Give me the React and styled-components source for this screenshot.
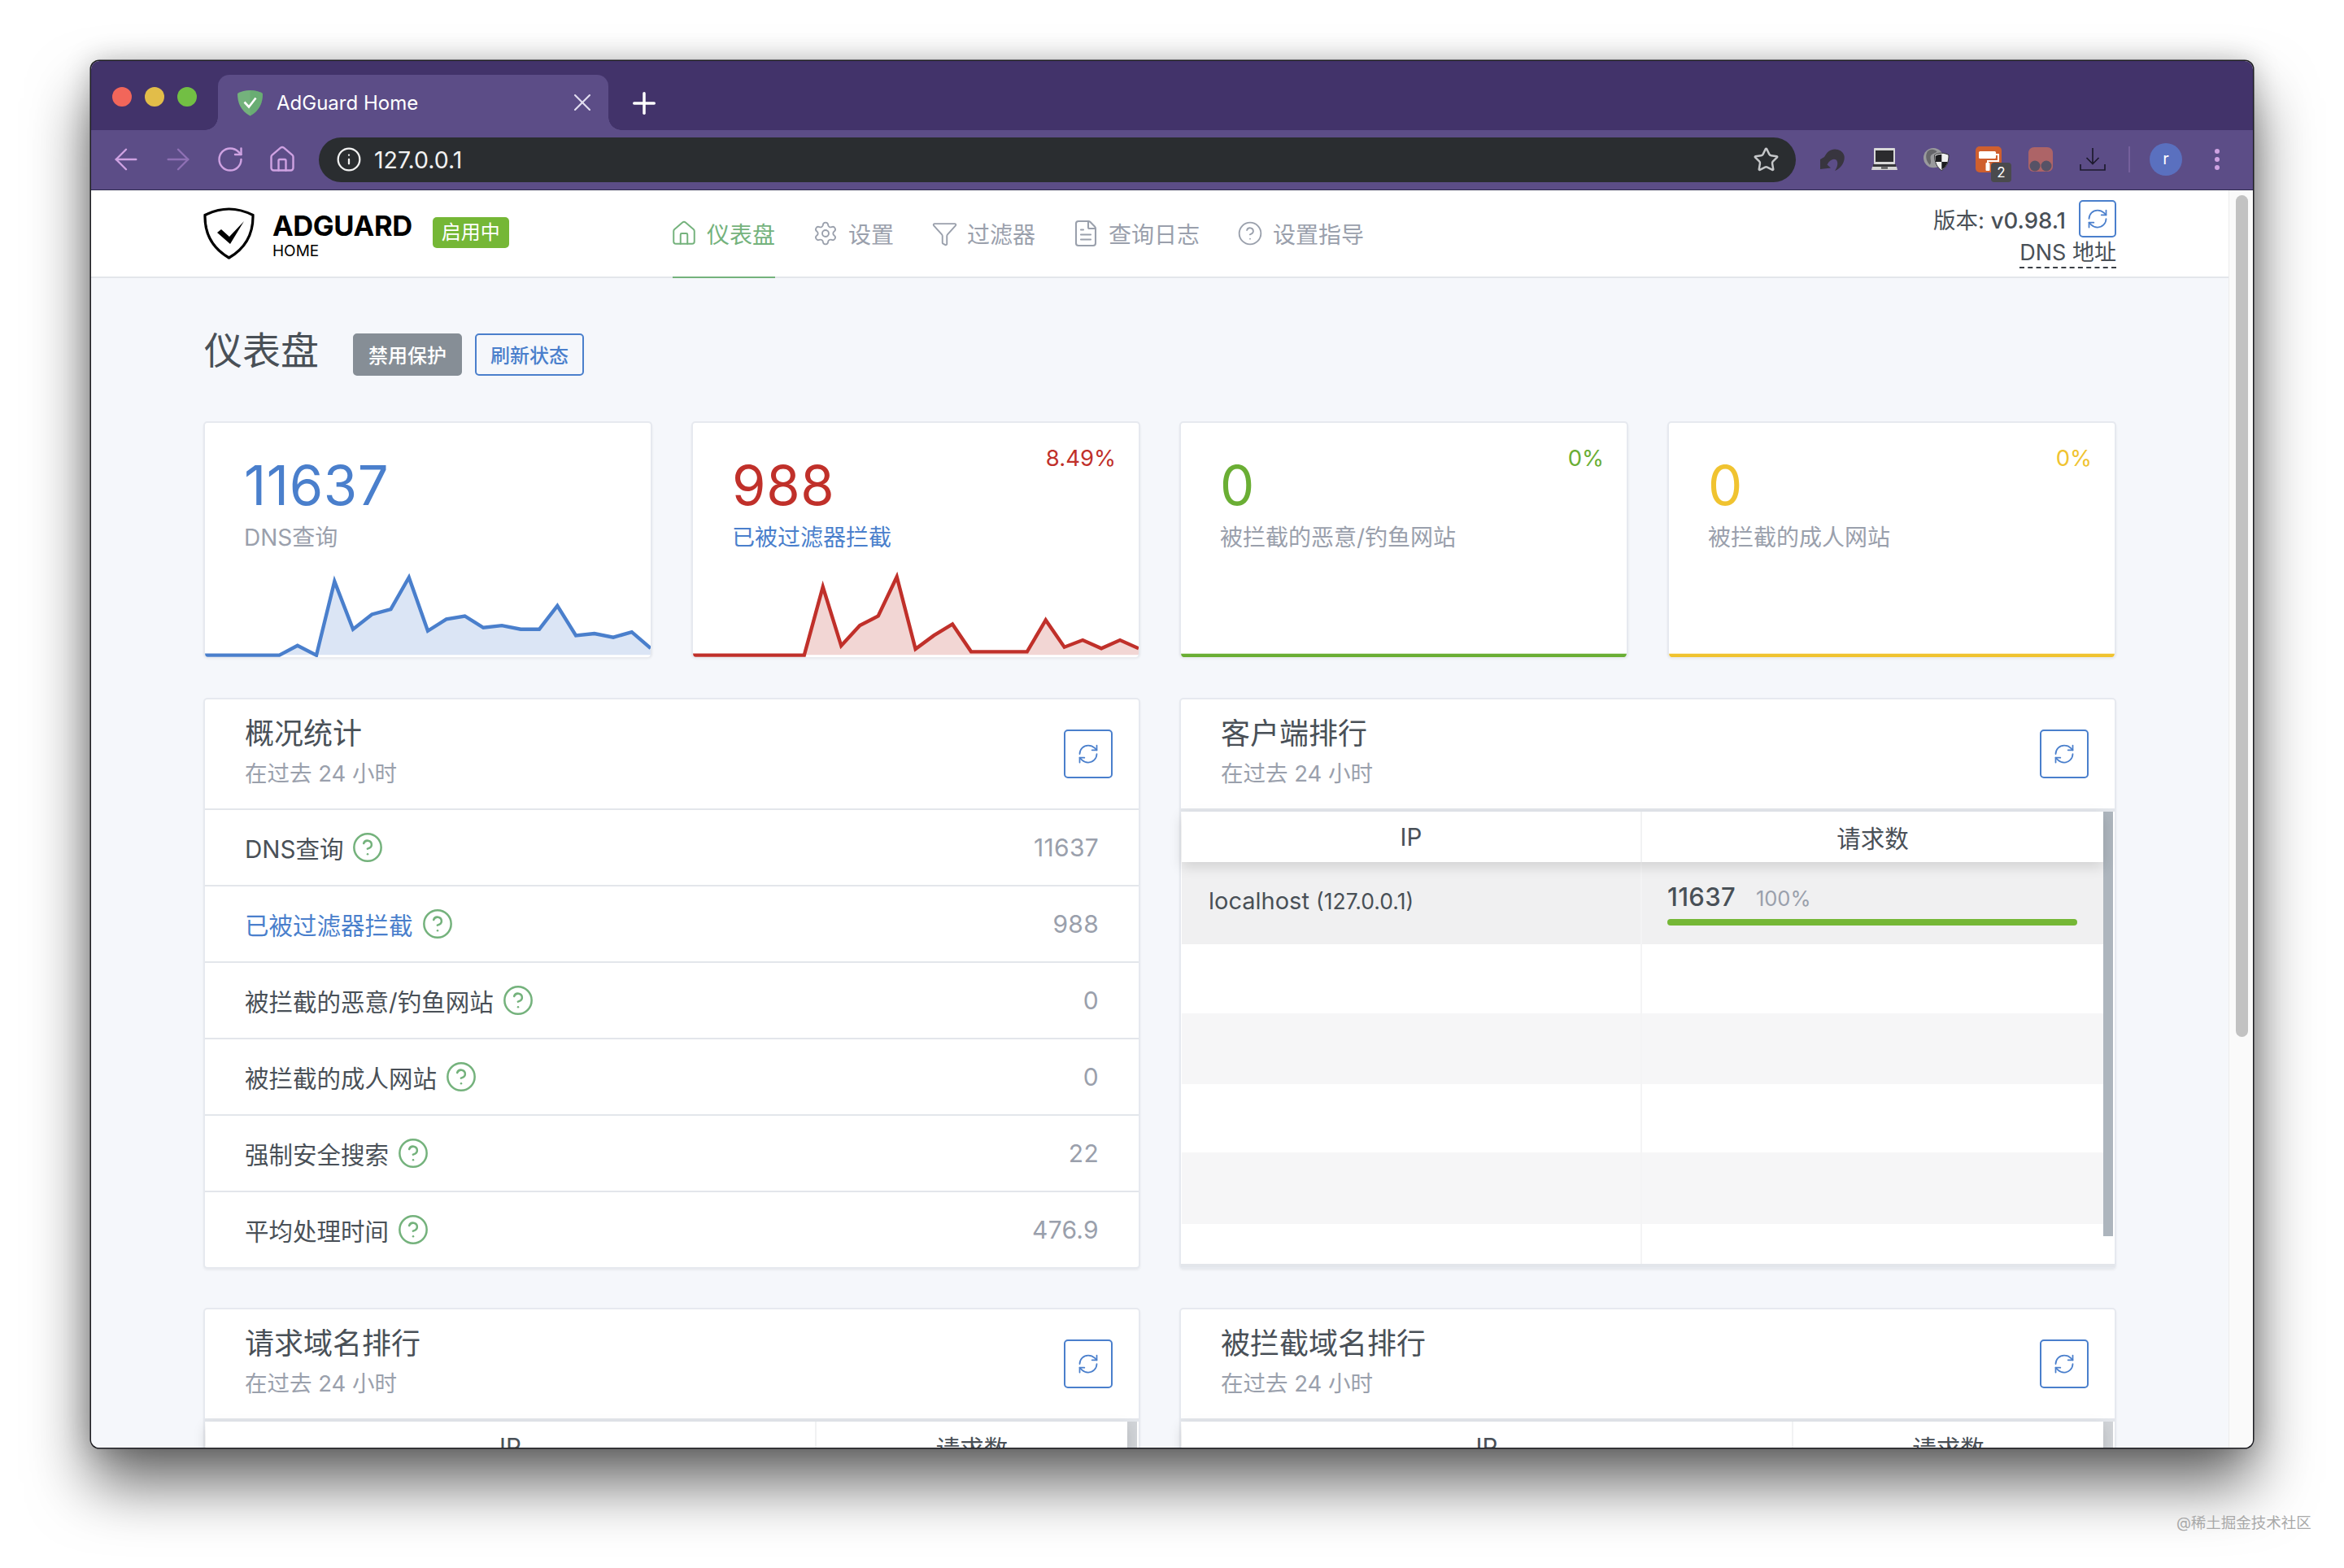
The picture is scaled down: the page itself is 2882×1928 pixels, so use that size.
import React from "react";
import styled, { createGlobalStyle } from "styled-components";
import {
  ArrowLeft,
  ArrowRight,
  RotateCw,
  House,
  Info,
  Star,
  Settings,
  Funnel,
  FileText,
  CircleHelp,
  RefreshCw,
  X,
  Plus,
} from "lucide-react";

const SANS = `Inter, "Noto Sans CJK SC", sans-serif`;
const BLUE = "#4a7fcc";
const GREEN = "#74b27c";
const LINE = "#e3e6eb";
const MUTED = "#9aa0ac";
const TEXT = "#495057";

const GlobalStyle = createGlobalStyle`
  html, body {
    margin: 0;
    background: #fff;
    font-family: ${SANS};
  }
  * { box-sizing: border-box; }
`;

// Screenshot backdrop, the browser window floats on it
const Backdrop = styled.div`
  position: relative;
  width: 2882px;
  height: 1928px;
  padding: 75px 0 0 112px;
  overflow: hidden;
  background: #fff;
`;

const Watermark = styled.div`
  position: absolute;
  left: 2676px;
  top: 1860px;
  font-size: 18.5px;
  line-height: 24px;
  color: #a9a9a9;
`;

const BrowserWindow = styled.div`
  width: 2658px;
  height: 1705px;
  display: flex;
  flex-direction: column;
  overflow: hidden;
  border-radius: 10px;
  box-shadow: 0 0 0 1.5px #1d1d22, 0 44px 76px rgba(0, 0, 0, 0.6), 0 0 34px rgba(0, 0, 0, 0.22);
`;

const TabStrip = styled.div`
  height: 85px;
  flex: none;
  display: flex;
  align-items: flex-end;
  padding-left: 26px;
  background: #42336a;
`;

const Lights = styled.div`
  display: flex;
  gap: 16px;
  margin: 0 26px 29px 0;
`;

const Light = styled.span`
  width: 24px;
  height: 24px;
  border-radius: 50%;
  background: ${(p) => p.$color};
`;

const Tab = styled.div`
  position: relative;
  width: 480px;
  height: 68px;
  display: flex;
  align-items: center;
  padding: 0 14px 0 23px;
  border-radius: 14px 14px 0 0;
  background: #5c4d87;
  color: #fff;
  font-size: 24px;

  &::before,
  &::after {
    content: "";
    position: absolute;
    bottom: 0;
    width: 16px;
    height: 16px;
  }
  &::before {
    left: -16px;
    background: radial-gradient(circle at 0 0, transparent 15.5px, #5c4d87 16px);
  }
  &::after {
    right: -16px;
    background: radial-gradient(circle at 100% 0, transparent 15.5px, #5c4d87 16px);
  }
`;

const TabTitle = styled.span`
  flex: 1;
  margin-left: 16px;
`;

const NewTab = styled.div`
  display: flex;
  align-self: center;
  margin: 18px 0 0 23px;
  color: #fff;
`;

const Toolbar = styled.div`
  height: 74px;
  flex: none;
  display: flex;
  align-items: center;
  padding: 0 0 1px 22px;
  border-bottom: 1.5px solid #2e2a4e;
  background: #5c4d87;
`;

const NavIcons = styled.div`
  display: flex;
  gap: 22px;
  margin-right: 24px;
  color: #cfa2e2;
`;

const NavIconSlot = styled.span`
  width: 42px;
  height: 42px;
  display: flex;
  align-items: center;
  justify-content: center;
  color: ${(p) => p.$color || "inherit"};
`;

const AddressBar = styled.div`
  width: 1816px;
  height: 55px;
  display: flex;
  align-items: center;
  padding: 0 20px 0 21px;
  border-radius: 28px;
  background: #2a2d30;
  color: #f1f1f1;
`;

const AddressText = styled.span`
  flex: 1;
  margin-left: 15px;
  font-size: 28.5px;
`;

const Extensions = styled.div`
  display: flex;
  align-items: center;
  gap: 32px;
  margin-left: 29px;
`;

const ExtSlot = styled.div`
  position: relative;
  width: 32px;
  height: 32px;
  display: flex;
  align-items: center;
  justify-content: center;
`;

const ExtBadge = styled.span`
  position: absolute;
  left: 19px;
  top: 20px;
  width: 25px;
  height: 24px;
  border-radius: 4px;
  background: #4a4a4d;
  color: #fff;
  font-size: 17px;
  line-height: 24px;
  text-align: center;
`;

const Divider = styled.span`
  width: 2px;
  height: 32px;
  margin-left: -4px;
  background: #75609c;
`;

const Avatar = styled.span`
  width: 40px;
  height: 40px;
  margin-left: -8px;
  border-radius: 50%;
  background: #5a70bf;
  color: #fff;
  font-size: 20px;
  line-height: 38px;
  text-align: center;
`;

const Kebab = styled.div`
  display: flex;
  flex-direction: column;
  gap: 4px;
  margin-left: 8px;

  span {
    width: 6px;
    height: 6px;
    border-radius: 50%;
    background: #cfa2e2;
  }
`;

const Viewport = styled.div`
  flex: 1;
  min-height: 0;
  display: flex;
`;

const Page = styled.div`
  flex: 1;
  min-width: 0;
  overflow: hidden;
  background: #f5f7fb;
`;

const WindowScroll = styled.div`
  width: 30px;
  flex: none;
  padding: 6px 6px 0 8px;
  border-left: 1px solid #ececec;
  background: #fafafa;

  &::before {
    content: "";
    display: block;
    height: 1035px;
    border-radius: 8px;
    background: #c2c2c2;
  }
`;

const Header = styled.header`
  height: 108px;
  display: flex;
  align-items: center;
  padding: 0 138px;
  border-bottom: 2px solid ${LINE};
  background: #fff;
`;

const Brand = styled.div`
  display: flex;
  align-items: center;
  width: 577px;
  flex: none;
`;

const BrandText = styled.div`
  margin: 6px 0 0 22px;
  color: #000;
`;

const BrandName = styled.div`
  font-size: 34.5px;
  font-weight: 700;
  line-height: 34px;
  letter-spacing: -0.4px;
`;

const BrandSub = styled.div`
  margin-top: 3px;
  font-size: 19px;
  line-height: 22px;
`;

const StatusBadge = styled.span`
  margin: -2px 0 0 25px;
  padding: 0 11px;
  height: 38px;
  border-radius: 5px;
  background: #75b736;
  color: #fff;
  font-size: 24px;
  line-height: 38px;
`;

const Nav = styled.nav`
  align-self: stretch;
  display: flex;
  gap: 48px;
`;

const NavItem = styled.a`
  display: flex;
  align-items: center;
  gap: 14px;
  height: 108px;
  border-bottom: 2px solid ${(p) => (p.$active ? GREEN : "transparent")};
  color: ${(p) => (p.$active ? GREEN : MUTED)};
  font-size: 28px;
`;

const NavGlyph = styled.span`
  width: 28px;
  display: flex;
  justify-content: center;

  svg {
    flex: none;
  }
`;

const HeaderMeta = styled.div`
  margin-left: auto;
  display: flex;
  flex-direction: column;
  align-items: flex-end;
  padding-top: 1px;
  color: ${TEXT};
  font-size: 27.5px;
`;

const VersionRow = styled.div`
  display: flex;
  align-items: center;
  gap: 16px;

  b {
    font-weight: 500;
  }
`;

const DnsLink = styled.span`
  margin-top: 2px;
  font-size: 27px;
  line-height: 34px;
  border-bottom: 2px dashed #3a3f45;
`;

const Content = styled.main`
  padding: 68px 138px 0;
`;

const PageHead = styled.div`
  height: 52px;
  display: flex;
  align-items: center;
  margin-bottom: 56px;
`;

const PageTitle = styled.h1`
  margin: -10px 42px 0 1px;
  color: ${TEXT};
  font-size: 47px;
  font-weight: 400;
  line-height: 52px;
`;

const Button = styled.button`
  height: 52px;
  margin-right: 16px;
  padding: 0 17px 2px;
  border: 2px solid ${(p) => (p.$solid ? "#868e96" : BLUE)};
  border-radius: 5px;
  background: ${(p) => (p.$solid ? "#868e96" : "transparent")};
  color: ${(p) => (p.$solid ? "#fff" : BLUE)};
  font-family: ${SANS};
  font-size: 24px;
  font-weight: 500;
`;

const IconButton = styled.button`
  width: ${(p) => p.$size}px;
  height: ${(p) => p.$size}px;
  display: flex;
  align-items: center;
  justify-content: center;
  padding: 0;
  border: 2px solid ${BLUE};
  border-radius: 5px;
  background: #fff;
  color: ${BLUE};
`;

const StatGrid = styled.section`
  display: grid;
  grid-template-columns: repeat(4, 1fr);
  gap: 48px;
  margin-bottom: 50px;
`;

const StatCard = styled.article`
  height: 290px;
  display: flex;
  flex-direction: column;
  overflow: hidden;
  border: 2px solid #e6e9ef;
  border-bottom: 0;
  border-radius: 5px;
  background: #fff;
  box-shadow: 0 2px 3px rgba(0, 0, 0, 0.06);
`;

const StatTop = styled.div`
  display: flex;
  justify-content: space-between;
  padding: 41px 28px 0 48px;
`;

const StatValue = styled.div`
  color: ${(p) => p.$color};
  font-size: 67px;
  line-height: 72px;
  letter-spacing: 0.6px;
`;

const StatPercent = styled.div`
  margin-top: -16px;
  color: ${(p) => p.$color};
  font-size: 27.5px;
  line-height: 36px;
`;

const StatLabel = styled.div`
  padding: 10px 0 0 48px;
  color: ${(p) => p.$color || MUTED};
  font-size: 28px;
  line-height: 36px;
`;

const Spark = styled.svg`
  display: block;
  width: 100%;
  height: 128px;
  margin-top: auto;
  flex: none;
`;

const PanelGrid = styled.section`
  display: grid;
  grid-template-columns: 1fr 1fr;
  gap: 48px;
`;

const Panel = styled.article`
  height: 702px;
  display: flex;
  flex-direction: column;
  border: 2px solid #e6e9ef;
  border-radius: 5px;
  background: #fff;
  box-shadow: 0 2px 3px rgba(0, 0, 0, 0.05);
`;

const PanelHead = styled.div`
  height: 136px;
  flex: none;
  display: flex;
  align-items: center;
  justify-content: space-between;
  padding: 0 32px 0 49px;
  border-bottom: 2px solid ${LINE};
`;

const PanelHeadText = styled.div`
  padding-bottom: 8px;
`;

const PanelTitle = styled.h2`
  margin: 0;
  color: ${TEXT};
  font-size: 36px;
  font-weight: 400;
  line-height: 48px;
`;

const PanelSub = styled.div`
  margin-top: 7px;
  color: ${MUTED};
  font-size: 27.5px;
  line-height: 36px;
`;

const StatRow = styled.div`
  flex: 1;
  display: flex;
  align-items: center;
  padding: 0 49px;
  border-bottom: 2px solid ${LINE};
  color: ${(p) => (p.$link ? BLUE : TEXT)};
  font-size: 29.5px;

  &:last-child {
    border-bottom: 0;
  }
`;

const RowHelp = styled.span`
  display: flex;
  margin-left: 10px;
  color: ${GREEN};
`;

const RowValue = styled.span`
  margin-left: auto;
  color: ${MUTED};
  font-size: 30px;
  letter-spacing: 0.3px;
`;

const TableWrap = styled.div`
  flex: 1;
  min-height: 0;
  display: flex;
  padding: 0 2px 0 1px;
  border-top: 2px solid ${LINE};
  border-bottom: 4px solid ${LINE};
`;

const Table = styled.div`
  flex: 1;
  min-width: 0;
  display: flex;
  flex-direction: column;
`;

const TableHead = styled.div`
  position: relative;
  z-index: 1;
  height: 62px;
  flex: none;
  display: grid;
  grid-template-columns: ${(p) => p.$first}px 1fr;
  background: #fff;
  box-shadow: 0 6px 15px rgba(0, 0, 0, 0.13);
  color: ${TEXT};
  font-size: 29.5px;
`;

const HeadCell = styled.div`
  display: flex;
  align-items: center;
  justify-content: center;
  border-right: 2px solid #f1f2f3;

  &:last-child {
    border-right: 0;
  }
`;

const TableRow = styled.div`
  flex: ${(p) => (p.$height ? `0 0 ${p.$height}px` : "1")};
  display: grid;
  grid-template-columns: ${(p) => p.$first}px 1fr;
  background: ${(p) => p.$bg};
`;

const Cell = styled.div`
  display: flex;
  flex-direction: column;
  justify-content: center;
  padding: 0 32px 0 ${(p) => p.$pad || 33}px;
  border-right: 2px solid #f4f4f5;
  color: ${TEXT};

  &:last-child {
    border-right: 0;
  }
`;

const ClientName = styled.div`
  margin-top: -6px;
  font-size: 29px;

  small {
    font-size: 26.5px;
  }
`;

const CountLine = styled.div`
  display: flex;
  align-items: baseline;
  gap: 25px;
  font-size: 31px;
  font-weight: 500;
  letter-spacing: 0.3px;

  span {
    color: ${MUTED};
    font-size: 25.5px;
    font-weight: 400;
    letter-spacing: 0;
  }
`;

const Bar = styled.div`
  height: 8px;
  margin-top: 9px;
  border-radius: 4px;
  background: #75b736;
`;

const TableScroll = styled.div`
  width: 12px;
  flex: none;

  &::before {
    content: "";
    display: block;
    height: 522px;
    background: ${(p) => p.$color};
  }
`;

// Points read off the reference, in the viewBox units of each chart
const QUERY_POINTS = [
  [50, 1278], [255, 1278], [305, 1242], [357, 1278], [407, 1005], [458, 1182], [510, 1127], [562, 1108],
  [612, 990], [664, 1188], [715, 1145], [766, 1133], [817, 1176], [868, 1168], [920, 1182], [971, 1182],
  [1021, 1095], [1072, 1205], [1123, 1198], [1175, 1212], [1226, 1192], [1278, 1252],
];

const BLOCK_POINTS = [
  [56, 918], [402, 918], [460, 665], [517, 883], [575, 808], [632, 773], [690, 628], [748, 895],
  [805, 845], [863, 803], [921, 905], [1095, 905], [1153, 788], [1211, 888], [1268, 862], [1326, 893],
  [1384, 862], [1442, 893],
];

const Sparkline = ({ points, viewBox, base, color }) => {
  const line = points.map((p) => p.join(",")).join(" ");
  const first = points[0][0];
  const last = points[points.length - 1][0];
  return (
    <Spark viewBox={viewBox} preserveAspectRatio="none">
      <polygon points={`${first},${base} ${line} ${last},${base}`} fill={color} fillOpacity="0.2" />
      <polyline points={line} fill="none" stroke={color} strokeWidth="4.4" vectorEffect="non-scaling-stroke" />
    </Spark>
  );
};

const FlatLine = ({ color }) => (
  <Spark viewBox="0 0 100 128" preserveAspectRatio="none">
    <line x1="0" x2="100" y1="126" y2="126" stroke={color} strokeWidth="4.4" vectorEffect="non-scaling-stroke" />
  </Spark>
);

const Logo = () => (
  <svg width="63" height="64" viewBox="0 0 63 64">
    <path
      d="M31.5 2C41 2 52 5 61 9.500C61.500 33 52 50 31.5 62C11 50 1.500 33 2 9.500C11 5 22 2 31.5 2Z"
      fill="#fff"
      stroke="#000"
      strokeWidth="3.2"
    />
    <path d="M17 31L22 27L32 36L50 17L33 45Z" fill="#000" />
  </svg>
);

const Favicon = () => (
  <svg width="33" height="33" viewBox="0 0 33 33">
    <path d="M16.5 1C22 1 28 2.500 32 5C32 17 28 26 16.500 32.500C5 26 1 17 1 5C5 2.500 11 1 16.500 1Z" fill="#74b27c" />
    <path d="M16.500 1C22 1 28 2.500 32 5C32 17 28 26 16.500 32.500Z" fill="#5ea86a" opacity="0.5" />
    <path d="M9.500 15.500L15 21.500L23.500 10.500" fill="none" stroke="#fff" strokeWidth="2.6" />
  </svg>
);

const RedoExt = () => (
  <svg width="32" height="28" viewBox="0 0 32 28">
    <path
      d="M1 14V26L14 24.500L9.500 20.500C12.500 15 17 12.500 20.500 14.500C23.500 17 22.500 23 19 28C26 25.500 32 17 30.500 9.500C28.500 1.500 17.500 -1 11.500 4C9 6 7.500 8.500 6 11Z"
      fill="#38353f"
    />
  </svg>
);

const LaptopExt = () => (
  <svg width="32" height="28" viewBox="0 0 32 28">
    <rect x="3" y="0" width="26" height="20" rx="1" fill="#d8d8d8" />
    <rect x="5" y="3" width="22" height="14" fill="#2b2b2e" />
    <rect x="2" y="20" width="28" height="3" fill="#36363a" />
    <path d="M1 23H31L32 27H0Z" fill="#d4d4d4" />
    <rect x="12" y="23.500" width="8" height="2" fill="#444" />
  </svg>
);

const GlobeExt = () => (
  <svg width="33" height="30" viewBox="0 0 33 30">
    <circle cx="12.500" cy="13" r="12.500" fill="#9a9a9d" />
    <path d="M5 5C9 1 14 2 17 5C15 8 11 7 9 11C8 15 11 18 8 22C3 17 2 10 5 5Z" fill="#66666a" />
    <path d="M23 7C26 7 30 8 32 9.500C32 19 29 25 23 29C17 25 14 19 14 9.500C16 8 20 7 23 7Z" fill="#f0f0f0" stroke="#2d2d30" strokeWidth="1" />
    <path d="M23 8.500V18H15.500C15.200 15 15 13 15 10.500C17 9.500 20 8.500 23 8.500ZM23 18H30.500C29.500 22 27 25.500 23 28Z" fill="#1d1d20" />
  </svg>
);

const RollerExt = () => (
  <svg width="32" height="32" viewBox="0 0 32 32">
    <rect width="32" height="32" rx="5" fill="#cf5f2e" />
    <rect x="4" y="6" width="21" height="9" rx="1.500" fill="#fff" />
    <path d="M25 10H28V18H15V23" fill="none" stroke="#fff" strokeWidth="2" />
    <rect x="12.500" y="20" width="5" height="10" rx="1" fill="#fff" />
  </svg>
);

const GhostExt = () => (
  <svg width="30" height="30" viewBox="0 0 30 30">
    <path d="M0 7C0 3 3 0 7 0H23C27 0 30 3 30 7V24C30 27 27 30 24 30H6C3 30 0 27 0 24Z" fill="#ad6467" />
    <circle cx="8" cy="23" r="6.500" fill="#565266" />
    <circle cx="22" cy="23" r="6.500" fill="#565266" />
  </svg>
);

const DownloadExt = () => (
  <svg width="32" height="28" viewBox="0 0 32 28" fill="none" stroke="#1d1a2e" strokeWidth="1.700">
    <path d="M16 0V19M8.500 12L16 19.500L23.500 12M1 20V27H31V20" />
  </svg>
);

const NAV = [
  { label: "仪表盘", Icon: House, size: 34, active: true },
  { label: "设置", Icon: Settings, size: 32 },
  { label: "过滤器", Icon: Funnel, size: 33 },
  { label: "查询日志", Icon: FileText, size: 36 },
  { label: "设置指导", Icon: CircleHelp, size: 32 },
];

const STAT_ROWS = [
  { label: "DNS查询", value: "11637" },
  { label: "已被过滤器拦截", value: "988", link: true },
  { label: "被拦截的恶意/钓鱼网站", value: "0" },
  { label: "被拦截的成人网站", value: "0" },
  { label: "强制安全搜索", value: "22" },
  { label: "平均处理时间", value: "476.9" },
];

const PanelHeader = ({ title }) => (
  <PanelHead>
    <PanelHeadText>
      <PanelTitle>{title}</PanelTitle>
      <PanelSub>在过去 24 小时</PanelSub>
    </PanelHeadText>
    <IconButton $size={60}>
      <RefreshCw size={28} strokeWidth={1.5} />
    </IconButton>
  </PanelHead>
);

const RankTable = ({ first, thumb, children }) => (
  <TableWrap>
    <Table>
      <TableHead $first={first}>
        <HeadCell>IP</HeadCell>
        <HeadCell>请求数</HeadCell>
      </TableHead>
      {children}
    </Table>
    <TableScroll $color={thumb} />
  </TableWrap>
);

const EmptyRow = ({ first, height, bg }) => (
  <TableRow $first={first} $height={height} $bg={bg}>
    <Cell />
    <Cell />
  </TableRow>
);

export default function App() {
  return (
    <>
      <GlobalStyle />
      <Backdrop>
        <BrowserWindow>
          <TabStrip>
            <Lights>
              <Light $color="#f2665a" />
              <Light $color="#e2bd49" />
              <Light $color="#72bf44" />
            </Lights>
            <Tab>
              <Favicon />
              <TabTitle>AdGuard Home</TabTitle>
              <X size={36} strokeWidth={1.4} color="#e3dff0" />
            </Tab>
            <NewTab>
              <Plus size={42} strokeWidth={2} />
            </NewTab>
          </TabStrip>

          <Toolbar>
            <NavIcons>
              <NavIconSlot>
                <ArrowLeft size={42} strokeWidth={1.4} />
              </NavIconSlot>
              <NavIconSlot $color="#8e70b4">
                <ArrowRight size={42} strokeWidth={1.4} />
              </NavIconSlot>
              <NavIconSlot>
                <RotateCw size={36} strokeWidth={1.6} />
              </NavIconSlot>
              <NavIconSlot>
                <House size={36} strokeWidth={1.6} />
              </NavIconSlot>
            </NavIcons>
            <AddressBar>
              <Info size={32} strokeWidth={1.7} />
              <AddressText>127.0.0.1</AddressText>
              <Star size={33} strokeWidth={1.8} color="#c4c6c8" />
            </AddressBar>
            <Extensions>
              <ExtSlot><RedoExt /></ExtSlot>
              <ExtSlot><LaptopExt /></ExtSlot>
              <ExtSlot><GlobeExt /></ExtSlot>
              <ExtSlot>
                <RollerExt />
                <ExtBadge>2</ExtBadge>
              </ExtSlot>
              <ExtSlot><GhostExt /></ExtSlot>
              <ExtSlot><DownloadExt /></ExtSlot>
              <Divider />
              <Avatar>r</Avatar>
              <Kebab>
                <span />
                <span />
                <span />
              </Kebab>
            </Extensions>
          </Toolbar>

          <Viewport>
            <Page>
              <Header>
                <Brand>
                  <Logo />
                  <BrandText>
                    <BrandName>ADGUARD</BrandName>
                    <BrandSub>HOME</BrandSub>
                  </BrandText>
                  <StatusBadge>启用中</StatusBadge>
                </Brand>
                <Nav>
                  {NAV.map(({ label, Icon, size, active }) => (
                    <NavItem key={label} $active={active}>
                      <NavGlyph>
                        <Icon size={size} strokeWidth={1.4} />
                      </NavGlyph>
                      {label}
                    </NavItem>
                  ))}
                </Nav>
                <HeaderMeta>
                  <VersionRow>
                    <span>
                      版本: <b>v0.98.1</b>
                    </span>
                    <IconButton $size={46}>
                      <RefreshCw size={28} strokeWidth={1.5} />
                    </IconButton>
                  </VersionRow>
                  <DnsLink>DNS 地址</DnsLink>
                </HeaderMeta>
              </Header>

              <Content>
                <PageHead>
                  <PageTitle>仪表盘</PageTitle>
                  <Button $solid>禁用保护</Button>
                  <Button>刷新状态</Button>
                </PageHead>

                <StatGrid>
                  <StatCard>
                    <StatTop>
                      <StatValue $color={BLUE}>11637</StatValue>
                    </StatTop>
                    <StatLabel>DNS查询</StatLabel>
                    <Sparkline points={QUERY_POINTS} viewBox="50 900 1228 385" base={1277} color={BLUE} />
                  </StatCard>
                  <StatCard>
                    <StatTop>
                      <StatValue $color="#c0302a">988</StatValue>
                      <StatPercent $color="#c0302a">8.49%</StatPercent>
                    </StatTop>
                    <StatLabel $color={BLUE}>已被过滤器拦截</StatLabel>
                    <Sparkline points={BLOCK_POINTS} viewBox="56 540 1386 385" base={917} color="#c0302a" />
                  </StatCard>
                  <StatCard>
                    <StatTop>
                      <StatValue $color="#6aae34">0</StatValue>
                      <StatPercent $color="#6aae34">0%</StatPercent>
                    </StatTop>
                    <StatLabel>被拦截的恶意/钓鱼网站</StatLabel>
                    <FlatLine color="#6aae34" />
                  </StatCard>
                  <StatCard>
                    <StatTop>
                      <StatValue $color="#f0c330">0</StatValue>
                      <StatPercent $color="#f0c330">0%</StatPercent>
                    </StatTop>
                    <StatLabel>被拦截的成人网站</StatLabel>
                    <FlatLine color="#f0c330" />
                  </StatCard>
                </StatGrid>

                <PanelGrid>
                  <Panel>
                    <PanelHeader title="概况统计" />
                    {STAT_ROWS.map((row) => (
                      <StatRow key={row.label} $link={row.link}>
                        {row.label}
                        <RowHelp>
                          <CircleHelp size={40} strokeWidth={1.5} />
                        </RowHelp>
                        <RowValue>{row.value}</RowValue>
                      </StatRow>
                    ))}
                  </Panel>

                  <Panel>
                    <PanelHeader title="客户端排行" />
                    <RankTable first={566} thumb="#adb5bd">
                      <TableRow $first={566} $height={101} $bg="#f0f0f1">
                        <Cell>
                          <ClientName>
                            localhost <small>(127.0.0.1)</small>
                          </ClientName>
                        </Cell>
                        <Cell $pad={31}>
                          <CountLine>
                            11637 <span>100%</span>
                          </CountLine>
                          <Bar />
                        </Cell>
                      </TableRow>
                      <EmptyRow first={566} height={85} bg="#fff" />
                      <EmptyRow first={566} height={87} bg="#f6f6f7" />
                      <EmptyRow first={566} height={84} bg="#fff" />
                      <EmptyRow first={566} height={88} bg="#f6f6f7" />
                      <EmptyRow first={566} bg="#fff" />
                    </RankTable>
                  </Panel>

                  <Panel>
                    <PanelHeader title="请求域名排行" />
                    <RankTable first={751} thumb="#d0d3d7" />
                  </Panel>

                  <Panel>
                    <PanelHeader title="被拦截域名排行" />
                    <RankTable first={752} thumb="#d0d3d7" />
                  </Panel>
                </PanelGrid>
              </Content>
            </Page>
            <WindowScroll />
          </Viewport>
        </BrowserWindow>
        <Watermark>@稀土掘金技术社区</Watermark>
      </Backdrop>
    </>
  );
}
